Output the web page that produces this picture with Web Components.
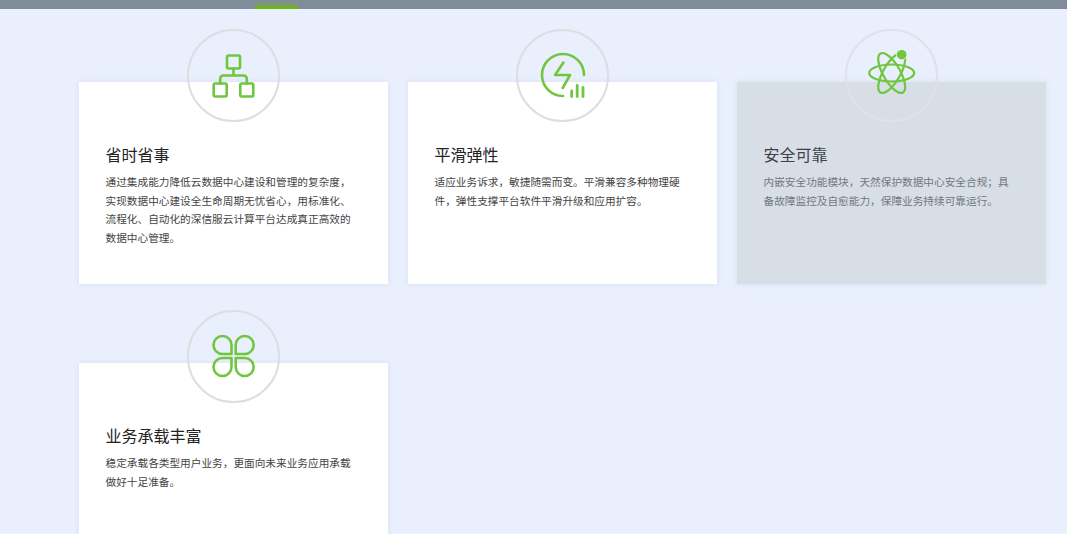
<!DOCTYPE html>
<html lang="zh-CN"><head><meta charset="utf-8"><title>Features</title>
<style>
html,body{margin:0;height:534px;overflow:hidden;background:#e9effc;}
body{font-family:"Noto Sans CJK SC","Noto Sans",sans-serif;}
svg.i{width:88.500px;height:88.500px;display:block;fill:none;stroke:#70c63f;stroke-width:2.600;stroke-linecap:round;stroke-linejoin:round;}
</style></head><body>
<template id="t-bar"><style>
:host{display:block;height:9px;background:#808c9a;}
.g{width:43px;height:9px;margin-left:255px;display:flex;flex-direction:column;justify-content:flex-end;background:linear-gradient(#808c9a,#7c9a72 55%,#7c9a72);}
.g i{display:block;height:3px;background:#6cb51a;}
</style><div class="g"><i></i></div></template>
<template id="t-grid"><style>
:host{display:grid;grid-template-columns:repeat(3,309px);column-gap:20px;row-gap:79px;padding:73px 0 0 79px;}
</style><slot></slot></template>
<template id="t-card"><style>
:host{display:block;position:relative;height:202px;box-sizing:border-box;padding:62px 26.500px 0;background:#fff;box-shadow:0 0 5px rgba(195,205,230,.4);color:#444;}
:host([muted]){background:#d7dee6;color:#72777d;box-shadow:0 0 4px rgba(180,190,210,.35);}
.c{position:absolute;left:108px;top:-53px;width:92.500px;height:92.500px;box-sizing:border-box;border:2px solid #dcdee2;border-radius:50%;display:flex;align-items:center;justify-content:center;}
:host([muted]) .c{border-color:#dfe2e8;}
h3{margin:0;font-size:16px;line-height:20px;font-weight:400;color:#222;}
:host([muted]) h3{color:#3d4147;}
p{margin:9.300px 0 0;font-size:10.667px;line-height:18.400px;width:254px;}
</style><div class="c"><slot name="icon"></slot></div><h3><slot name="title"></slot></h3><p><slot></slot></p></template>
<script>
function def(name,tid){customElements.define(name,class extends HTMLElement{constructor(){super();this.attachShadow({mode:"open"}).appendChild(document.getElementById(tid).content.cloneNode(true));}});}
def("top-bar","t-bar");def("feature-grid","t-grid");def("feature-card","t-card");
</script>
<top-bar></top-bar>
<feature-grid>
<feature-card>
<svg slot="icon" class="i" viewBox="2 2 88.500 88.500"><rect x="40" y="26.500" width="13" height="13" rx="1.500"/><rect x="26.700" y="54.500" width="13" height="13" rx="1.500"/><rect x="53.300" y="54.500" width="13" height="13" rx="1.500"/><path d="M46.500 39.500v7M33.200 54.500v-5a3 3 0 0 1 3-3h20.600a3 3 0 0 1 3 3v5"/></svg>
<span slot="title">省时省事</span>通过集成能力降低云数据中心建设和管理的复杂度，实现数据中心建设全生命周期无忧省心，用标准化、流程化、自动化的深信服云计算平台达成真正高效的数据中心管理。
</feature-card>
<feature-card>
<svg slot="icon" class="i" viewBox="2 2 88.500 88.500"><path d="M47 67A21 21 0 1 1 68 46"/><path d="M47.300 33.700 39 46H54L46.700 59"/><path d="M55.700 62v5.500M61.200 56.500v11M67 58.500v9" stroke-width="2.800"/></svg>
<span slot="title">平滑弹性</span>适应业务诉求，敏捷随需而变。平滑兼容多种物理硬件，弹性支撑平台软件平滑升级和应用扩容。
</feature-card>
<feature-card muted>
<svg slot="icon" class="i" viewBox="2 2 88.500 88.500"><g stroke-width="2.200"><ellipse cx="46.700" cy="44" rx="22.500" ry="8.500"/><ellipse cx="46.700" cy="44" rx="22.500" ry="8.500" transform="rotate(60 46.700 44)"/><ellipse cx="46.700" cy="44" rx="22.500" ry="8.500" transform="rotate(-60 46.700 44)"/></g><circle cx="56.700" cy="25.700" r="4.800" fill="#70c63f" stroke="#e9effc" stroke-width="1.500" style="paint-order:stroke"/></svg>
<span slot="title">安全可靠</span>内嵌安全功能模块，天然保护数据中心安全合规；具备故障监控及自愈能力，保障业务持续可靠运行。
</feature-card>
<feature-card>
<svg slot="icon" class="i" viewBox="2 2 88.500 88.500"><path d="M44.500 44H35.500A9 9 0 1 1 44.500 35Z"/><path d="M48.700 44H57.700A9 9 0 1 0 48.700 35Z"/><path d="M44.500 48H35.500A9 9 0 1 0 44.500 57Z"/><path d="M48.700 48H57.700A9 9 0 1 1 48.700 57Z"/></svg>
<span slot="title">业务承载丰富</span>稳定承载各类型用户业务，更面向未来业务应用承载做好十足准备。
</feature-card>
</feature-grid>
</body></html>
